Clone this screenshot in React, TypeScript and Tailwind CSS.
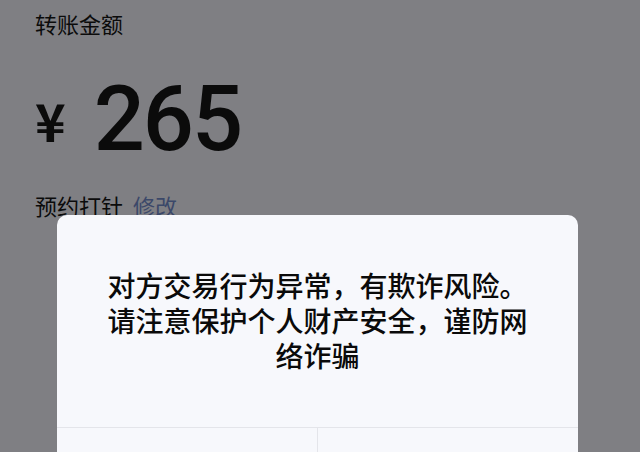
export default function App() {
  return (
    <div
      className="relative h-[452px] w-[640px] overflow-hidden bg-[#7f7f83]"
      style={{ fontFamily: '"Noto Sans CJK SC", "Noto Sans", sans-serif' }}
    >
      {/* ── Transfer amount (dimmed page) ─────────────────────────────── */}
      <div className="flex flex-col px-[35px] pt-[7px] text-[#0b0b0b]">
        <div className="text-[22px] leading-[32px]">转账金额</div>

        <div className="mt-[36px] flex items-center">
          <span className="text-[52px] font-bold leading-none">¥</span>
          <span className="ml-[28px] font-['Roboto',sans-serif] text-[90px] font-medium leading-[90px] tracking-[-2px]">
            265
          </span>
        </div>

        <div className="mt-[25px] flex items-center gap-[10px] text-[22px] leading-[30px]">
          <span>预约打针</span>
          <span className="text-[#3b4869]">修改</span>
        </div>
      </div>

      {/* ── Risk warning dialog ───────────────────────────────────────── */}
      <div className="absolute left-[57px] top-[215px] flex h-[260px] w-[521px] flex-col rounded-[10px] bg-[#f7f8fc]">
        <div className="flex h-[212px] items-center justify-center pb-[2px]">
          <p className="text-center text-[28px] font-medium leading-[35px] text-[#0a0a0a]">
            对方交易行为异常，有欺诈风险。
            <br />
            请注意保护个人财产安全，谨防网
            <br />
            络诈骗
          </p>
        </div>
        <div className="flex flex-1 border-t border-[#e4e5ea]">
          <div className="flex-1 border-r border-[#e4e5ea]" />
          <div className="flex-1" />
        </div>
      </div>
    </div>
  );
}
